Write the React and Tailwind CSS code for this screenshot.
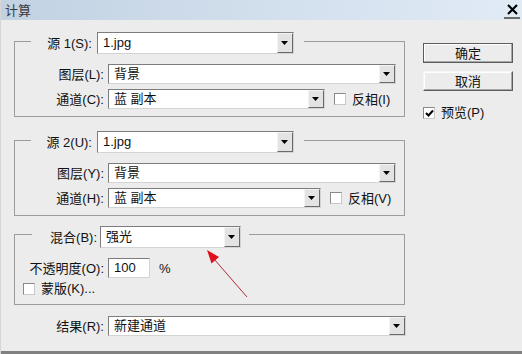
import React from "react";

const BG = "bg-[#ececec]";

function Arrow() {
  return (
    <svg width="8" height="4" viewBox="0 0 8 4">
      <path d="M0 0H7L3.5 4Z" fill="#000" />
    </svg>
  );
}

function Select({ value, className = "" }) {
  return (
    <div
      className={`flex items-stretch bg-white border border-t-[#7c7c7c] border-l-[#7c7c7c] border-b-[#d4d4d4] border-r-[#d4d4d4] ${className}`}
    >
      <span className="flex-1 flex items-center pl-[5px] text-[13px] text-[#111] truncate">
        {value}
      </span>
      <span className="w-[16px] flex items-center justify-center bg-[#e3e3e3] border border-t-[#f4f4f4] border-l-[#f4f4f4] border-b-[#6a6a6a] border-r-[#6a6a6a]">
        <Arrow />
      </span>
    </div>
  );
}

function CheckBox({ checked = false }) {
  return (
    <span className="w-[12px] h-[12px] flex items-center justify-center bg-white border border-t-[#8a8a8a] border-l-[#8a8a8a] border-b-[#c8c8c8] border-r-[#c8c8c8]">
      {checked && (
        <svg width="9" height="8" viewBox="0 0 9 8">
          <path d="M1 4L3.5 6.5L8 1.5" stroke="#000" strokeWidth="2" fill="none" />
        </svg>
      )}
    </span>
  );
}

function Group({ children, className = "" }) {
  return <div className={`w-[391px] border border-[#9c9c9c] ${className}`}>{children}</div>;
}

function Legend({ label, value, labelW, selectW, className }) {
  return (
    <div className={`flex items-center w-fit ${BG} ${className}`}>
      <span className={`${labelW} text-right text-[13px] leading-none`}>{label}</span>
      <Select value={value} className={`${selectW} h-[22px]`} />
    </div>
  );
}

function Row({ label, value, selectW, check, className = "" }) {
  return (
    <div className={`flex items-center h-[20px] ${className}`}>
      <span className="w-[89px] text-right text-[13px] leading-none">{label}</span>
      <Select value={value} className={`${selectW} h-[20px] ml-[4px]`} />
      {check && (
        <div className={`flex items-center gap-[6px] ${check.ml}`}>
          <CheckBox />
          <span className="text-[13px] leading-none">{check.label}</span>
        </div>
      )}
    </div>
  );
}

function Button({ children, primary }) {
  return (
    <div
      className={`w-[90px] h-[20px] flex items-center justify-center text-[13px] leading-none ${
        primary ? "border border-[#5c5c5c]" : "border border-t-[#f6f6f6] border-l-[#f6f6f6] border-b-[#5c5c5c] border-r-[#5c5c5c]"
      } shadow-[inset_-1px_-1px_0_#a8a8a8,inset_1px_1px_0_#ffffff]`}
    >
      {children}
    </div>
  );
}

export default function App() {
  return (
    <div
      className={`relative w-[522px] h-[354px] overflow-hidden flex flex-col ${BG} text-[#111] font-['Liberation_Sans','Noto_Sans_CJK_SC',sans-serif] border-l border-[#d6d6d6]`}
    >
      <div className="h-[20px] shrink-0 flex items-center justify-between bg-gradient-to-r from-[#c2d2e3] to-[#e1ebf6]">
        <span className="pl-[4px] text-[13px] leading-none text-[#3a3a3a]">计算</span>
        <span className="w-[16px] h-[18px] mr-[2px] flex items-center justify-center border-b-2 border-[#6a6a6a]">
          <svg width="11" height="11" viewBox="0 0 11 11">
            <path d="M1 1L10 10M10 1L1 10" stroke="#000" strokeWidth="2.2" />
          </svg>
        </span>
      </div>

      <div className="flex items-start pt-[21px]">
        <div className="ml-[13px] flex flex-col">
          <Group>
            <Legend
              label="源 1(S):"
              value="1.jpg"
              labelW="w-[66px] pr-[5px]"
              selectW="w-[197px]"
              className="-mt-[10px] ml-[16px] pr-[10px]"
            />
            <Row label="图层(L):" value="背景" selectW="w-[288px]" className="mt-[10px]" />
            <Row
              label="通道(C):"
              value="蓝 副本"
              selectW="w-[217px]"
              className="mt-[5px] mb-[7px]"
              check={{ label: "反相(I)", ml: "ml-[9px]" }}
            />
          </Group>

          <Group className="mt-[23px]">
            <Legend
              label="源 2(U):"
              value="1.jpg"
              labelW="w-[66px] pr-[5px]"
              selectW="w-[197px]"
              className="-mt-[10px] ml-[16px] pr-[10px]"
            />
            <Row label="图层(Y):" value="背景" selectW="w-[288px]" className="mt-[10px]" />
            <Row
              label="通道(H):"
              value="蓝 副本"
              selectW="w-[213px]"
              className="mt-[5px] mb-[7px]"
              check={{ label: "反相(V)", ml: "ml-[9px]" }}
            />
          </Group>

          <Group className="mt-[18px]">
            <Legend
              label="混合(B):"
              value="强光"
              labelW="w-[68px] pr-[3px]"
              selectW="w-[141px]"
              className="-mt-[9px] ml-[17px] pr-[8px]"
            />
            <div className="flex items-center h-[20px] mt-[10px]">
              <span className="w-[89px] text-right text-[13px] leading-none">不透明度(O):</span>
              <div className="ml-[4px] w-[42px] h-[20px] flex items-center pl-[5px] bg-white border border-t-[#7c7c7c] border-l-[#7c7c7c] border-b-[#d4d4d4] border-r-[#d4d4d4] text-[13px]">
                100
              </div>
              <span className="ml-[9px] text-[13px] leading-none">%</span>
            </div>
            <div className="flex items-center gap-[6px] ml-[8px] mt-[4px] mb-[9px] h-[13px]">
              <CheckBox />
              <span className="text-[13px] leading-none">蒙版(K)...</span>
            </div>
          </Group>

          <div className="flex items-center h-[20px] mt-[11px]">
            <span className="w-[90px] text-right text-[13px] leading-none">结果(R):</span>
            <Select value="新建通道" className="w-[298px] h-[20px] ml-[4px]" />
          </div>
        </div>

        <div className="ml-[17px] pt-[2px] flex flex-col">
          <Button primary>确定</Button>
          <div className="mt-[8px]">
            <Button>取消</Button>
          </div>
          <div className="mt-[15px] flex items-center gap-[6px]">
            <CheckBox checked />
            <span className="text-[13px] leading-none">预览(P)</span>
          </div>
        </div>
      </div>

      <div className="mt-auto h-[3px] shrink-0 bg-[#808080]" />

      <svg
        className="absolute top-0 left-0 pointer-events-none"
        width="522"
        height="354"
        viewBox="0 0 522 354"
      >
        <line x1="246" y1="297" x2="213" y2="259" stroke="#b02838" strokeWidth="1" />
        <polygon points="206,250 218,257 210.5,263.5" fill="#e0101e" />
      </svg>
    </div>
  );
}
